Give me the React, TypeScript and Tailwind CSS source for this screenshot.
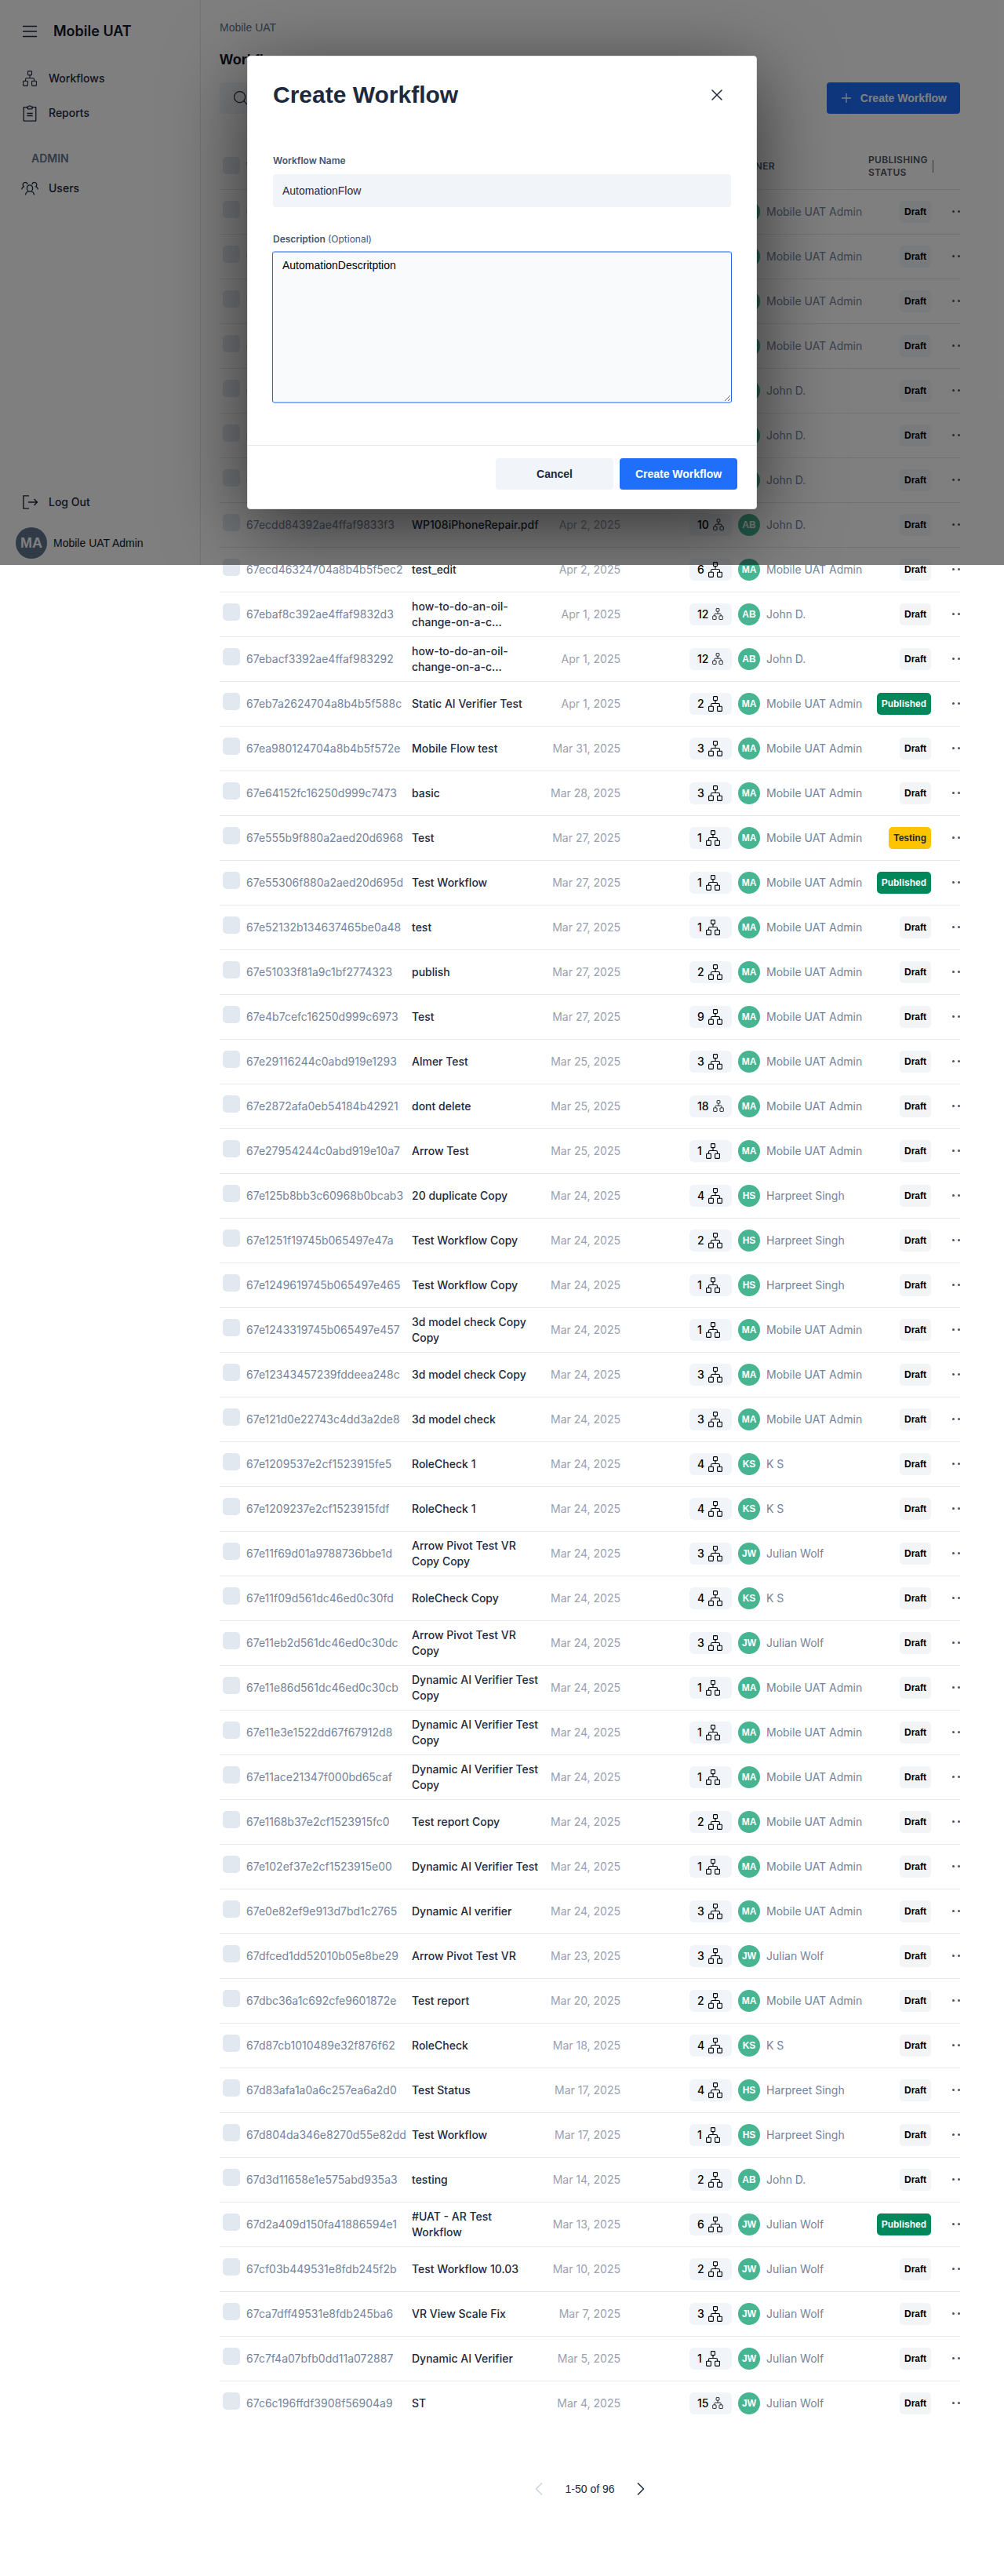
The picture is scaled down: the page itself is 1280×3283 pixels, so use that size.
import React from "react";

type Owner = "MA" | "AB" | "HS" | "KS" | "JW";
type Status = "Draft" | "Published" | "Testing";
type Row = [id: string, name: string, date: string, steps: number, owner: Owner, status?: Status];

const owners: Record<Owner, string> = {
  MA: "Mobile UAT Admin",
  AB: "John D.",
  HS: "Harpreet Singh",
  KS: "K S",
  JW: "Julian Wolf",
};

const rows: Row[] = [
  ["67f4f1a2392ae4ffaf983a10", "Test", "Apr 8, 2025", 1, "MA"],
  ["67f4e0b1392ae4ffaf983a02", "Test", "Apr 8, 2025", 1, "MA"],
  ["67f3c2d4392ae4ffaf9839c1", "Test", "Apr 7, 2025", 1, "MA"],
  ["67f3a1b7392ae4ffaf98398e", "Test", "Apr 7, 2025", 1, "MA"],
  ["67ef91c3392ae4ffaf983811", "Test", "Apr 4, 2025", 1, "AB"],
  ["67ee60f2392ae4ffaf98370b", "Test", "Apr 3, 2025", 1, "AB"],
  ["67ede2a1392ae4ffaf983655", "Test", "Apr 3, 2025", 1, "AB"],
  ["67ecdd84392ae4ffaf9833f3", "WP108iPhoneRepair.pdf", "Apr 2, 2025", 10, "AB"],
  ["67ecd46324704a8b4b5f5ec2", "test_edit", "Apr 2, 2025", 6, "MA"],
  ["67ebaf8c392ae4ffaf9832d3", "how-to-do-an-oil-change-on-a-c...", "Apr 1, 2025", 12, "AB"],
  ["67ebacf3392ae4ffaf983292", "how-to-do-an-oil-change-on-a-c...", "Apr 1, 2025", 12, "AB"],
  ["67eb7a2624704a8b4b5f588c", "Static AI Verifier Test", "Apr 1, 2025", 2, "MA", "Published"],
  ["67ea980124704a8b4b5f572e", "Mobile Flow test", "Mar 31, 2025", 3, "MA"],
  ["67e64152fc16250d999c7473", "basic", "Mar 28, 2025", 3, "MA"],
  ["67e555b9f880a2aed20d6968", "Test", "Mar 27, 2025", 1, "MA", "Testing"],
  ["67e55306f880a2aed20d695d", "Test Workflow", "Mar 27, 2025", 1, "MA", "Published"],
  ["67e52132b134637465be0a48", "test", "Mar 27, 2025", 1, "MA"],
  ["67e51033f81a9c1bf2774323", "publish", "Mar 27, 2025", 2, "MA"],
  ["67e4b7cefc16250d999c6973", "Test", "Mar 27, 2025", 9, "MA"],
  ["67e29116244c0abd919e1293", "Almer Test", "Mar 25, 2025", 3, "MA"],
  ["67e2872afa0eb54184b42921", "dont delete", "Mar 25, 2025", 18, "MA"],
  ["67e27954244c0abd919e10a7", "Arrow Test", "Mar 25, 2025", 1, "MA"],
  ["67e125b8bb3c60968b0bcab3", "20 duplicate Copy", "Mar 24, 2025", 4, "HS"],
  ["67e1251f19745b065497e47a", "Test Workflow Copy", "Mar 24, 2025", 2, "HS"],
  ["67e1249619745b065497e465", "Test Workflow Copy", "Mar 24, 2025", 1, "HS"],
  ["67e1243319745b065497e457", "3d model check Copy Copy", "Mar 24, 2025", 1, "MA"],
  ["67e12343457239fddeea248c", "3d model check Copy", "Mar 24, 2025", 3, "MA"],
  ["67e121d0e22743c4dd3a2de8", "3d model check", "Mar 24, 2025", 3, "MA"],
  ["67e1209537e2cf1523915fe5", "RoleCheck 1", "Mar 24, 2025", 4, "KS"],
  ["67e1209237e2cf1523915fdf", "RoleCheck 1", "Mar 24, 2025", 4, "KS"],
  ["67e11f69d01a9788736bbe1d", "Arrow Pivot Test VR Copy Copy", "Mar 24, 2025", 3, "JW"],
  ["67e11f09d561dc46ed0c30fd", "RoleCheck Copy", "Mar 24, 2025", 4, "KS"],
  ["67e11eb2d561dc46ed0c30dc", "Arrow Pivot Test VR Copy", "Mar 24, 2025", 3, "JW"],
  ["67e11e86d561dc46ed0c30cb", "Dynamic AI Verifier Test Copy", "Mar 24, 2025", 1, "MA"],
  ["67e11e3e1522dd67f67912d8", "Dynamic AI Verifier Test Copy", "Mar 24, 2025", 1, "MA"],
  ["67e11ace21347f000bd65caf", "Dynamic AI Verifier Test Copy", "Mar 24, 2025", 1, "MA"],
  ["67e1168b37e2cf1523915fc0", "Test report Copy", "Mar 24, 2025", 2, "MA"],
  ["67e102ef37e2cf1523915e00", "Dynamic AI Verifier Test", "Mar 24, 2025", 1, "MA"],
  ["67e0e82ef9e913d7bd1c2765", "Dynamic AI verifier", "Mar 24, 2025", 3, "MA"],
  ["67dfced1dd52010b05e8be29", "Arrow Pivot Test VR", "Mar 23, 2025", 3, "JW"],
  ["67dbc36a1c692cfe9601872e", "Test report", "Mar 20, 2025", 2, "MA"],
  ["67d87cb1010489e32f876f62", "RoleCheck", "Mar 18, 2025", 4, "KS"],
  ["67d83afa1a0a6c257ea6a2d0", "Test Status", "Mar 17, 2025", 4, "HS"],
  ["67d804da346e8270d55e82dd", "Test Workflow", "Mar 17, 2025", 1, "HS"],
  ["67d3d11658e1e575abd935a3", "testing", "Mar 14, 2025", 2, "AB"],
  ["67d2a409d150fa41886594e1", "#UAT - AR Test Workflow", "Mar 13, 2025", 6, "JW", "Published"],
  ["67cf03b449531e8fdb245f2b", "Test Workflow 10.03", "Mar 10, 2025", 2, "JW"],
  ["67ca7dff49531e8fdb245ba6", "VR View Scale Fix", "Mar 7, 2025", 3, "JW"],
  ["67c7f4a07bfb0dd11a072887", "Dynamic AI Verifier", "Mar 5, 2025", 1, "JW"],
  ["67c6c196ffdf3908f56904a9", "ST", "Mar 4, 2025", 15, "JW"],
];

const statusStyles: Record<Status, string> = {
  Draft: "bg-gray-100 text-black",
  Published: "bg-[#00875a] text-white",
  Testing: "bg-[#ffc400] text-slate-800",
};

function FlowIcon({ className }: { className: string }) {
  return (
    <svg viewBox="0 0 18 20" className={className} fill="none" stroke="currentColor" strokeWidth="1.1" aria-hidden="true">
      <rect x="6.500" y="0.600" width="5" height="5" rx="0.800" />
      <rect x="0.600" y="13.200" width="5.800" height="6.200" rx="0.800" />
      <rect x="11.600" y="13.200" width="5.800" height="6.200" rx="0.800" />
      <path d="M9 5.600v3.900M3.500 13.200v-2q0-1.700 1.700-1.700h7.600q1.700 0 1.700 1.700v2" />
    </svg>
  );
}

function ReportIcon() {
  return (
    <svg viewBox="0 0 18 21" className="h-[21px] w-[18px]" fill="none" stroke="currentColor" strokeWidth="1.3" aria-hidden="true">
      <path d="M5.500 2.700H1.200v17.400h15.600V2.700h-4.300" strokeLinejoin="round" />
      <path d="M5.500 2.200h1.700a1.900 1.900 0 0 1 3.600 0h1.700q-.2 2.600-1.600 2.600H7.100q-1.400 0-1.600-2.600z" strokeLinejoin="round" />
      <path d="M5.400 10.500h7.200M5.400 13.500h7.200" />
    </svg>
  );
}

function UsersIcon() {
  return (
    <svg viewBox="0 0 22 18" className="h-[18px] w-[22px]" fill="none" stroke="currentColor" strokeWidth="1.3" strokeLinecap="round" aria-hidden="true">
      <ellipse cx="11" cy="9" rx="3.600" ry="4.200" />
      <path d="M5.500 16.800c.4-2 1.500-3.200 3.200-3.800M16.500 16.800c-.4-2-1.500-3.200-3.200-3.800" />
      <path d="M8 3.500A3 3 0 1 0 3.300 6.800C1.800 7.400.9 8.400.7 9.800M14 3.500a3 3 0 1 1 4.700 3.300c1.500.6 2.400 1.600 2.600 3" />
    </svg>
  );
}

function NavLink({ icon, label }: { icon: React.ReactNode; label: string }) {
  return (
    <a href="#" className="flex h-11 items-center gap-[13px] pl-[27px] text-sm font-medium text-slate-800">
      <span className="flex w-[22px] justify-center">{icon}</span>
      {label}
    </a>
  );
}

function Sidebar() {
  return (
    <aside className="sticky top-0 flex h-[720px] w-64 shrink-0 flex-col border-r border-slate-200 pb-2">
      <div className="flex h-[78px] items-center gap-[21px] pt-0.5 pl-[29px]">
        <button type="button" aria-label="Toggle menu" className="text-slate-800">
          <svg viewBox="0 0 18 16" className="h-4 w-[18px]" stroke="currentColor" strokeWidth="1.4" aria-hidden="true">
            <path d="M0 1.500h18M0 8h18M0 14.500h18" />
          </svg>
        </button>
        <span className="text-lg font-semibold text-slate-900">Mobile UAT</span>
      </div>
      <nav className="flex grow flex-col">
        <NavLink icon={<FlowIcon className="h-5 w-[18px]" />} label="Workflows" />
        <NavLink icon={<ReportIcon />} label="Reports" />
        <h2 className="mt-6 mb-1 pl-10 text-sm leading-6 font-semibold text-slate-500">ADMIN</h2>
        <NavLink icon={<UsersIcon />} label="Users" />
      </nav>
      <a href="#" className="flex h-11 items-center gap-[13px] pl-[29px] text-sm font-medium text-slate-800">
        <svg viewBox="0 0 20 18" className="h-[18px] w-5" fill="none" stroke="currentColor" strokeWidth="1.4" aria-hidden="true">
          <path d="M8 .9H.9v16.200H8M7 9h11.500M14.500 5l4 4-4 4" />
        </svg>
        Log Out
      </a>
      <div className="mt-2.5 flex items-center gap-2 pl-5 font-['Liberation_Sans',Arial,sans-serif]">
        <span className="flex size-10 items-center justify-center rounded-full bg-slate-500 text-lg font-bold text-white">MA</span>
        <span className="text-sm text-slate-900">Mobile UAT Admin</span>
      </div>
    </aside>
  );
}

function Checkbox({ label }: { label: string }) {
  return <input type="checkbox" aria-label={label} className="block size-[22px] appearance-none rounded-[5px] bg-slate-200" />;
}

function WorkflowTable() {
  const head = "p-0 pt-0.5 text-left text-xs leading-4 font-semibold tracking-wide text-gray-600 uppercase";
  return (
    <table className="mt-[37px] w-full table-fixed border-collapse">
      <colgroup>
        <col className="w-[34px]" />
        <col className="w-[211px]" />
        <col className="w-[167px]" />
        <col className="w-[99px]" />
        <col className="w-[150px]" />
        <col />
        <col className="w-[83px]" />
        <col className="w-[34px]" />
      </colgroup>
      <thead>
        <tr className="h-[59px] border-b border-gray-200">
          <th className="p-0 pl-1"><Checkbox label="Select all workflows" /></th>
          <th className={head}>Workflow ID</th>
          <th className={head}>Workflow</th>
          <th className={head}>Last edited</th>
          <th className={head}><span className="block pl-[89px]">Steps</span></th>
          <th className={head}>Owner</th>
          <th className={head}>
            <div className="flex items-center justify-between">
              <span className="w-[78px]">Publishing Status</span>
              <span className="h-4 w-px shrink-0 bg-gray-500" />
            </div>
          </th>
          <th className={head} aria-label="Actions" />
        </tr>
      </thead>
      <tbody>
        {rows.map(([id, name, date, steps, owner, status = "Draft"]) => (
          <tr key={id} className="h-[57px] border-b border-gray-200 text-sm leading-5 last:border-b-0">
            <td className="p-0 pb-[5px] pl-1"><Checkbox label={`Select ${name}`} /></td>
            <td className="p-0 text-[#74839c]">{id}</td>
            <td className="p-0 font-medium text-slate-800">{name}</td>
            <td className="p-0 text-right text-gray-400">{date}</td>
            <td className="p-0">
              <span className="mr-2 ml-auto flex h-7 w-[54px] items-center gap-[5px] rounded-md bg-slate-100 pl-2.5 font-medium text-black">
                {steps}
                <FlowIcon className={steps > 9 ? "h-[15px] w-[14px]" : "h-5 w-[18px]"} />
              </span>
            </td>
            <td className="p-0">
              <span className="flex items-center gap-2 whitespace-nowrap text-[#74839c]">
                <span className="flex size-7 shrink-0 items-center justify-center rounded-full bg-[#47b592] font-['Liberation_Sans',Arial,sans-serif] text-xs font-bold text-white">{owner}</span>
                {owners[owner]}
              </span>
            </td>
            <td className="p-0">
              <span className={`mr-[3px] ml-auto flex h-7 w-fit items-center rounded-[5px] px-1.5 font-['Liberation_Sans',Arial,sans-serif] text-xs font-bold ${statusStyles[status]}`}>{status}</span>
            </td>
            <td className="overflow-hidden p-0">
              <button type="button" aria-label={`Actions for ${name}`} className="flex w-full items-center gap-1 overflow-hidden pl-6">
                <span className="size-[3px] shrink-0 rounded-full bg-slate-600" />
                <span className="size-[3px] shrink-0 rounded-full bg-slate-600" />
              </button>
            </td>
          </tr>
        ))}
      </tbody>
    </table>
  );
}

function CreateWorkflowDialog() {
  return (
    <div className="absolute inset-x-0 top-0 flex h-[720px] items-center justify-center overflow-hidden bg-black/50">
      <form
        role="dialog"
        aria-labelledby="dialog-title"
        className="w-[650px] rounded border border-gray-200 bg-white font-['Liberation_Sans',Arial,sans-serif] shadow-[0_24px_100px_rgba(0,0,0,0.6)]"
      >
        <div className="flex items-center justify-between px-8 pt-[31px]">
          <h2 id="dialog-title" className="text-3xl leading-9 font-bold text-slate-800">Create Workflow</h2>
          <button type="button" aria-label="Close" className="flex size-9 items-center justify-center text-slate-800">
            <svg viewBox="0 0 14 14" className="size-3.5" stroke="currentColor" strokeWidth="1.500" strokeLinecap="round" aria-hidden="true">
              <path d="M1 1l12 12M13 1L1 13" />
            </svg>
          </button>
        </div>
        <div className="px-8 pt-[58px] pb-[53px]">
          <label htmlFor="name" className="block font-[Inter,sans-serif] text-xs leading-4 font-semibold text-slate-600">Workflow Name</label>
          <input id="name" type="text" defaultValue="AutomationFlow" className="mt-[9px] block h-[42px] w-full rounded bg-slate-100 px-3 text-sm text-slate-800" />
          <label htmlFor="description" className="mt-[33px] block font-[Inter,sans-serif] text-xs leading-4 font-semibold text-slate-600">
            Description <span className="font-normal">(Optional)</span>
          </label>
          <textarea
            id="description"
            defaultValue="AutomationDescritption"
            className="-mx-px mt-[7px] block h-[194px] w-[calc(100%+2px)] rounded border border-y-2 border-[#8aaef7] border-x-[#2563eb] bg-slate-50 px-3 py-[6px] text-sm text-black outline-none"
          />
        </div>
        <div className="flex justify-end gap-2 border-t border-slate-200 px-6 pt-4 pb-6 text-sm font-bold">
          <button type="button" className="h-10 w-[150px] rounded bg-slate-100 text-slate-800">Cancel</button>
          <button type="submit" className="h-10 w-[150px] rounded bg-[#1f6ffb] text-white">Create Workflow</button>
        </div>
      </form>
    </div>
  );
}

export default function App() {
  return (
    <div className="relative flex min-h-screen items-start bg-white font-[Inter,'Liberation_Sans',sans-serif]">
      <Sidebar />
      <main className="min-w-0 grow pr-14 pb-24 pl-6">
        <p className="pt-[25px] font-['Liberation_Sans',Arial,sans-serif] text-sm leading-5 text-slate-500">Mobile UAT</p>
        <h1 className="mt-[17px] font-['Liberation_Sans',Arial,sans-serif] text-lg leading-7 font-bold text-slate-900">Workflows</h1>
        <div className="mt-[15px] flex items-center justify-between">
          <label className="flex h-10 w-80 items-center gap-3 rounded bg-slate-100 pl-[18px] text-slate-800">
            <svg viewBox="0 0 20 20" className="size-5" fill="none" stroke="currentColor" strokeWidth="1.300" aria-hidden="true">
              <circle cx="8.500" cy="8.500" r="7.800" />
              <path d="M14 14l5.500 5.500" />
            </svg>
            <input type="search" aria-label="Search workflows" className="w-full bg-transparent text-sm outline-none" />
          </label>
          <button type="button" className="flex h-10 items-center gap-3 rounded bg-[#1f6ffb] pr-[17px] pl-[19px] font-['Liberation_Sans',Arial,sans-serif] text-sm font-bold text-white">
            <svg viewBox="0 0 12 12" className="size-3" stroke="currentColor" strokeWidth="1.300" aria-hidden="true">
              <path d="M6 0v12M0 6h12" />
            </svg>
            Create Workflow
          </button>
        </div>
        <WorkflowTable />
        <div className="mt-[69px] flex h-6 items-center justify-center gap-7 font-['Liberation_Sans',Arial,sans-serif] text-sm text-slate-800">
          <button type="button" aria-label="Previous page" className="text-slate-300">
            <svg viewBox="0 0 10 16" className="h-4 w-2.5" fill="none" stroke="currentColor" strokeWidth="1.500" aria-hidden="true"><path d="M9 .5L1.500 8 9 15.500" /></svg>
          </button>
          <span>1-50 of 96</span>
          <button type="button" aria-label="Next page">
            <svg viewBox="0 0 10 16" className="h-4 w-2.5" fill="none" stroke="currentColor" strokeWidth="1.500" aria-hidden="true"><path d="M1 .5L8.500 8 1 15.500" /></svg>
          </button>
        </div>
      </main>
      <CreateWorkflowDialog />
    </div>
  );
}
